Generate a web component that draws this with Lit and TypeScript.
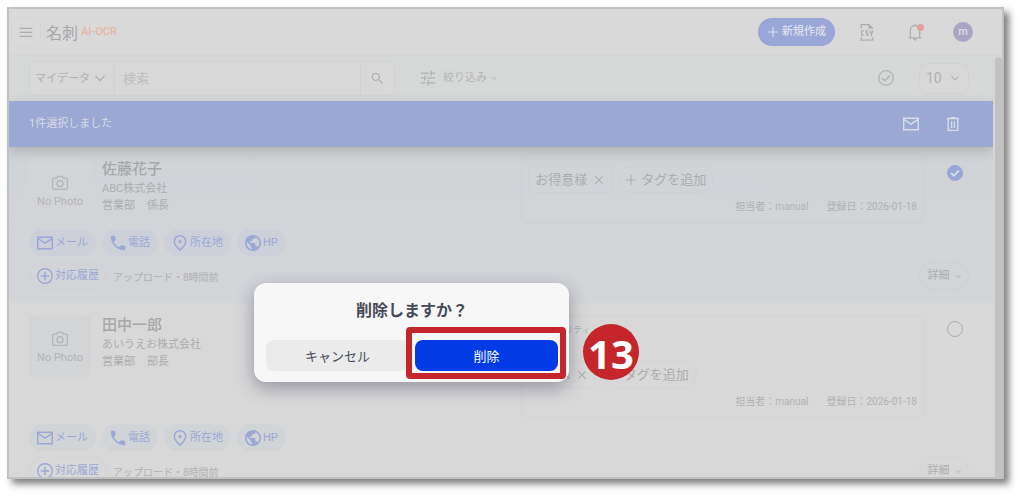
import { LitElement, html, css, svg, nothing } from "lit";
import { customElement, property } from "lit/decorators.js";

const icons = {
  menu: svg`<path d="M4 7.500h16M4 12.500h16M4 17.500h16" fill="none" stroke="currentColor" stroke-width="1.400"/>`,
  plus: svg`<path d="M12 2v20M2 12h20" fill="none" stroke="currentColor" stroke-width="2.2"/>`,
  close: svg`<path d="M3 3l18 18M21 3L3 21" fill="none" stroke="currentColor" stroke-width="2.6"/>`,
  chevron: svg`<path d="M3 8l9 9 9-9" fill="none" stroke="currentColor" stroke-width="3"/>`,
  search: svg`<path fill="currentColor" d="M15.5 14h-.79l-.28-.27A6.47 6.47 0 0 0 16 9.5 6.5 6.5 0 1 0 9.5 16c1.61 0 3.09-.59 4.23-1.57l.27.28v.79l5 4.99L20.49 19l-4.99-5zm-6 0C7.01 14 5 11.99 5 9.5S7.01 5 9.5 5 14 7.01 14 9.5 11.99 14 9.5 14z"/>`,
  tune: svg`<path fill="currentColor" d="M3 17v2h6v-2H3zM3 5v2h10V5H3zm10 16v-2h8v-2h-8v-2h-2v6h2zM7 9v2H3v2h4v2h2V9H7zm14 4v-2H11v2h10zm-6-4h2V7h4V5h-4V3h-2v6z"/>`,
  checkCircle: svg`<circle cx="12" cy="12" r="9.1" fill="none" stroke="currentColor" stroke-width="1.6"/><path d="M7.2 12.2l3.3 3.3 6.4-6.4" fill="none" stroke="currentColor" stroke-width="1.8"/>`,
  check: svg`<path d="M7.2 12.2l3.3 3.3 6.4-6.6" fill="none" stroke="currentColor" stroke-width="2.2"/>`,
  mail: svg`<path fill="currentColor" d="M22 4H2v16h20V4zm-1.8 14.2H3.8V8l8.2 5.2L20.200 8v10.200zM12 11.200L3.800 5.800h16.400L12 11.200z"/>`,
  trash: svg`<path fill="none" stroke="currentColor" stroke-width="1.800" d="M4.500 5.200h15M9 4h6M6 5.500v14.500h12V5.500M10.200 8.500v8.500M13.800 8.500v8.500"/>`,
  phone: svg`<path fill="currentColor" d="M6.620 10.790c1.440 2.830 3.760 5.140 6.590 6.590l2.200-2.200c.27-.27.67-.36 1.020-.24 1.120.37 2.330.57 3.570.57.550 0 1 .45 1 1V20c0 .550-.450 1-1 1-9.390 0-17-7.610-17-17 0-.550.450-1 1-1h3.500c.550 0 1 .450 1 1 0 1.250.200 2.450.570 3.570.110.350.030.740-.250 1.020l-2.200 2.200z"/>`,
  pin: svg`<path fill="none" stroke="currentColor" stroke-width="1.800" d="M12 2.900c3.900 0 7.100 3 7.100 7.300 0 3-2.300 6.500-7.100 10.700-4.800-4.200-7.100-7.700-7.100-10.700 0-4.300 3.200-7.300 7.100-7.300z"/><circle cx="12" cy="10" r="1.900" fill="currentColor"/>`,
  globe: svg`<path fill="currentColor" d="M12 2C6.480 2 2 6.480 2 12s4.480 10 10 10 10-4.480 10-10S17.520 2 12 2zm-1 17.930c-3.950-.490-7-3.850-7-7.930 0-.620.080-1.210.210-1.790L9 15v1c0 1.100.900 2 2 2v1.930zm6.900-2.540c-.260-.810-1-1.390-1.900-1.390h-1v-3c0-.550-.450-1-1-1H8v-2h2c.550 0 1-.450 1-1V7h2c1.100 0 2-.900 2-2v-.410c2.930 1.190 5 4.060 5 7.410 0 2.080-.800 3.970-2.100 5.390z"/>`,
  plusCircle: svg`<circle cx="12" cy="12" r="9.100" fill="none" stroke="currentColor" stroke-width="1.700"/><path d="M12 6.800v10.400M6.800 12h10.400" fill="none" stroke="currentColor" stroke-width="1.800"/>`,
  camera: svg`<path fill="none" stroke="currentColor" stroke-width="1.600" stroke-linejoin="round" d="M9.400 3.800h5.200l1.700 2h3.100q1.800 0 1.800 1.800v10.600q0 1.800-1.800 1.800H4.600q-1.800 0-1.800-1.800V7.600q0-1.800 1.800-1.800h3.100z"/><circle cx="12" cy="12.800" r="3.700" fill="none" stroke="currentColor" stroke-width="1.600"/>`,
  bell: svg`<path fill="none" stroke="currentColor" stroke-width="1.400" d="M5 18.500h14M6.800 18.500V10.500c0-3.200 2.100-5.500 5.200-5.500s5.200 2.300 5.200 5.500v8M12 5V3.400"/><path fill="currentColor" d="M10 19.400h4c0 1.100-.9 2-2 2s-2-.9-2-2z"/>`,
  csv: svg`<path fill="none" stroke="currentColor" stroke-width="1.400" d="M5.500 8.500V3.800h8.500l4.500 4.400M5.500 17.500v3.500h13v-3.500"/><path fill="currentColor" d="M13.600 3.200v5.300h5.500z"/><path fill="none" stroke="currentColor" stroke-width="1.300" d="M8.600 10.800H6v4.700h2.600M13.600 10.800h-2.800v2.300h2.500v2.400h-2.800M15.500 10.300l1.500 5 1.500-5"/>`,
};
type IconName = keyof typeof icons;

const icon = (name: IconName, size = "m") =>
  html`<svg class="icon ${size}" viewBox="2 2 20 20" aria-hidden="true">${icons[name]}</svg>`;

interface Contact {
  id: string;
  name: string;
  company: string;
  dept: string;
  title: string;
  tag: string;
  priority?: string;
  selected: boolean;
}

const contacts: Contact[] = [
  { id: "c1", name: "佐藤花子", company: "ABC株式会社", dept: "営業部", title: "係長", tag: "お得意様", selected: true },
  { id: "c2", name: "田中一郎", company: "あいうえお株式会社", dept: "営業部", title: "部長", tag: "見込A", priority: "プライオリティ", selected: false },
];

const links: { icon: IconName; label: string }[] = [
  { icon: "mail", label: "メール" },
  { icon: "phone", label: "電話" },
  { icon: "pin", label: "所在地" },
  { icon: "globe", label: "HP" },
];

const base = css`
  * { box-sizing: border-box; }
  button, input, select { font: inherit; color: inherit; margin: 0; padding: 0; border: 0; background: none; }
  a { color: inherit; text-decoration: none; }
  h1, h2, p { margin: 0; }
  .icon { display: block; flex: none; width: 16px; height: 16px; }
  .icon.xs { width: 6px; height: 6px; }
  .icon.s { width: 10px; height: 10px; }
  .icon.l { width: 18px; height: 18px; }
`;

@customElement("contact-card")
class ContactCard extends LitElement {
  @property({ attribute: false }) contact!: Contact;

  static styles = [base, css`
    :host { display: block; }
    .card { padding: 12px 24px 13px 20px; background: #d8d8d8; --photo: #d2d4d5; --chip: #d0d4d6; --line: #d3d3d3; }
    .card.selected {
      background: linear-gradient(#cfd3d6, #d2d4d8 80px);
      --photo: #d3d4d6; --chip: #cdd0d9; --line: #cdcfd2;
    }
    .top { display: grid; grid-template-columns: minmax(0, 55fr) minmax(0, 45fr) 45px; }
    .who { display: flex; gap: 11px; }
    .photo {
      width: 62px; height: 62px; border-radius: 6px; background: var(--photo); color: #b4b5b7;
      display: flex; flex-direction: column; align-items: center; justify-content: center; gap: 3px;
      padding-top: 4px; line-height: 15px;
    }
    .name { font-size: 15px; line-height: 20px; margin-bottom: 1px; font-weight: 500; color: #a6a7aa; }
    .line { display: flex; gap: 12px; line-height: 17px; color: #acaeb0; }
    .memo {
      padding: 6px; border: 1px solid var(--line); border-radius: 6px;
      display: flex; flex-direction: column; color: #b0b2b4;
    }
    .priority { font-size: 9px; line-height: 16px; padding-bottom: 23px; }
    .tags { display: flex; gap: 6px; font-size: 13px; color: #abadaf; }
    .tag, .add { height: 27px; display: flex; align-items: center; border: 1px solid var(--line); line-height: 18px; }
    .tag { gap: 8px; padding: 0 8px 0 6px; border-radius: 5px; }
    .tag .icon { width: 8px; height: 8px; }
    .add { gap: 5px; padding: 0 7px; border-radius: 14px; }
    .meta { display: flex; justify-content: flex-end; gap: 18px; font-size: 10px; line-height: 15px; padding: 6px 0 2px; }
    .pick { display: flex; justify-content: flex-end; align-items: flex-start; padding: 6px 6px 0 0; }
    .tick { position: relative; display: block; width: 16px; height: 16px; color: #dfe1e6; }
    .tick input { appearance: none; display: block; width: 16px; height: 16px; border: 1px solid #abacae; border-radius: 50%; }
    .tick input:checked { background: #98a7d8; border-color: #98a7d8; }
    .tick .icon { position: absolute; inset: 0; pointer-events: none; }
    .row { display: flex; align-items: center; gap: 6px; margin-top: 6px; }
    .chip { height: 27px; display: flex; align-items: center; gap: 2px; padding: 0 8px; border-radius: 14px; background: var(--chip); color: #9ba8d6; line-height: 16px; }
    .pill { height: 28px; display: flex; align-items: center; gap: 2px; padding: 0 7px; border: 1px solid var(--line); border-radius: 14px; line-height: 16px; }
    .history { color: #9ba8d6; }
    .stamp { flex: 1; font-size: 10px; color: #b0b2b4; }
    .details { width: 50px; justify-content: center; gap: 5px; color: #adafb1; }
  `];

  render() {
    const c = this.contact;
    return html`
      <article class="card ${c.selected ? "selected" : ""}">
        <div class="top">
          <div class="who">
            <div class="photo">${icon("camera")}<span>No Photo</span></div>
            <div>
              <h2 class="name">${c.name}</h2>
              <p class="line">${c.company}</p>
              <p class="line"><span>${c.dept}</span><span>${c.title}</span></p>
            </div>
          </div>
          <div class="memo">
            ${c.priority ? html`<p class="priority">${c.priority}</p>` : nothing}
            <div class="tags">
              <span class="tag">${c.tag}<button aria-label="タグを削除">${icon("close")}</button></span>
              <button class="add">${icon("plus", "s")}タグを追加</button>
            </div>
            <div class="meta"><span>担当者：manual</span><span>登録日：2026-01-18</span></div>
          </div>
          <div class="pick">
            <label class="tick" for=${c.id}>
              <input id=${c.id} type="checkbox" aria-label=${c.name} .checked=${c.selected} />
              ${c.selected ? icon("check") : nothing}
            </label>
          </div>
        </div>
        <nav class="row">
          ${links.map((l) => html`<a class="chip" href="#">${icon(l.icon)}${l.label}</a>`)}
        </nav>
        <div class="row">
          <button class="pill history">${icon("plusCircle")}対応履歴</button>
          <span class="stamp">アップロード・8時間前</span>
          <button class="pill details">詳細${icon("chevron", "xs")}</button>
        </div>
      </article>
    `;
  }
}

@customElement("app-root")
class AppRoot extends LitElement {
  static styles = [base, css`
    :host {
      display: block; height: 100vh; box-sizing: border-box; padding: 7px 20px 18px 7px; overflow: hidden;
      background: #fff; font: 11px Roboto, "Noto Sans CJK JP", sans-serif;
    }
    .shell { position: relative; height: 100%; border: 2px solid #c1c1c1; box-shadow: 5px 5px 7px rgba(0, 0, 0, 0.5); }
    .screen { height: 100%; overflow: hidden; display: flex; flex-direction: column; background: #d8d8d8; }
    header {
      flex: none; height: 46px; display: flex; align-items: center; padding: 0 29px 0 2px;
      border-bottom: 1px solid #d2d4d4; background: #d9d9d9; color: #adaeb0;
    }
    .menu { width: 30px; height: 30px; display: grid; place-items: center; border: 1px solid #d5d5d5; border-radius: 6px; }
    .brand { flex: 1; display: flex; align-items: center; gap: 3px; margin-left: 5px; font-size: 16px; font-weight: 400; color: #a6a7a9; }
    .brand small { font-size: 11px; font-weight: 500; color: #e2b8a6; }
    .new {
      height: 28px; display: flex; align-items: center; gap: 4px; padding: 0 9px 0 10px; border-radius: 14px;
      background: #98a7d8; color: #dcdfe8; font-weight: 500; line-height: 16px;
    }
    .tools { display: flex; align-items: center; gap: 28px; margin-left: 22px; }
    .tool { position: relative; width: 20px; height: 20px; display: grid; place-items: center; line-height: 16px; }
    .dot { position: absolute; top: 2px; right: 1px; width: 7px; height: 7px; border-radius: 50%; background: #dfa29e; }
    .avatar { border-radius: 50%; background: #aaa5c5; color: #e0dfe6; font-weight: 500; }
    .body { flex: 1; min-height: 0; display: flex; background: #d6d6d6; }
    .main { flex: 1; min-width: 0; overflow: hidden; }
    .track { flex: none; width: 9px; padding: 2px 0 0 2px; }
    .thumb { height: 100%; background: #c2c2c2; border-radius: 4px 4px 0 0; }
    .toolbar { height: 46px; display: flex; align-items: center; padding: 0 24px 0 20px; background: #d6d8d7; color: #b0b1b1; }
    .search { flex: 0 1 366px; height: 35px; display: flex; border: 1px solid #d1d2d2; border-radius: 6px; background: #d8d8d8; }
    .drop { position: relative; display: flex; }
    .drop select { appearance: none; width: 100%; outline: none; }
    .drop .icon { position: absolute; right: 9px; top: 50%; margin-top: -5px; pointer-events: none; }
    .scope { width: 85px; border-right: 1px solid #d1d2d2; }
    .scope select { padding-left: 5px; }
    .query { flex: 1; min-width: 0; font-size: 13px; }
    .query input { width: 100%; height: 100%; padding: 0 8px; outline: none; }
    .query input::placeholder { color: #bcbdbd; opacity: 1; }
    .go { width: 34px; display: grid; place-items: center; border-left: 1px solid #d1d2d2; }
    .go .icon { width: 13px; height: 13px; }
    .filter { display: flex; align-items: center; gap: 7px; margin-left: 25px; color: #b4b6b6; line-height: 16px; }
    .filter .xs { margin-left: -3px; }
    .all { margin-left: auto; }
    .count { width: 50px; height: 31px; margin-left: 25px; border: 1px solid #d1d2d2; border-radius: 8px; font-size: 14px; background: #d8d8d8; }
    .count select { padding-left: 6px; }
    .count .icon { width: 8px; height: 8px; margin-top: -4px; }
    .bar {
      position: relative; height: 46px; display: flex; align-items: center; gap: 26px; padding: 0 32px 0 20px;
      background: #9aa8d4; color: #d8dbe4; box-shadow: 0 4px 12px rgba(0, 0, 0, 0.16); line-height: 16px;
    }
    .bar p { flex: 1; }
    .dialog {
      position: absolute; left: 245px; top: 274px; width: 315px; padding: 16px 11px 11px 12px;
      border-radius: 12px; background: #f7f7f7; box-shadow: 0 6px 18px rgba(40, 42, 70, 0.38); color: #474c58;
    }
    .dialog h2 { font-size: 16px; line-height: 24px; font-weight: 700; text-align: center; }
    .actions { display: flex; gap: 6px; margin-top: 17px; font-size: 13px; }
    .actions button { flex: 1; height: 31px; border-radius: 8px; background: #ebebeb; }
    .actions .danger { position: relative; background: #003be6; color: #fff; }
    .mark { position: absolute; inset: -13px -8px -8px -9px; border: 6px solid #c4262b; border-radius: 4px; pointer-events: none; }
    .step {
      position: absolute; left: 574px; top: 315px; width: 56px; height: 56px; padding-top: 4px; border-radius: 50%;
      display: grid; place-items: center; background: #c4262b; color: #fff;
      font: 700 40px/40px "Noto Sans", sans-serif;
    }
  `];

  render() {
    return html`
      <div class="shell">
        <div class="screen">
          <header>
            <button class="menu" aria-label="メニュー">${icon("menu")}</button>
            <h1 class="brand">名刺<small>AI-OCR</small></h1>
            <button class="new">${icon("plus", "s")}新規作成</button>
            <div class="tools">
              <button class="tool" aria-label="CSV">${icon("csv", "l")}</button>
              <button class="tool" aria-label="通知">${icon("bell", "l")}<span class="dot"></span></button>
              <button class="tool avatar">m</button>
            </div>
          </header>
          <div class="body">
            <main class="main">
              <div class="toolbar">
                <div class="search">
                  <label class="drop scope"><select aria-label="検索範囲"><option>マイデータ</option></select>${icon("chevron", "s")}</label>
                  <label class="query"><input type="search" placeholder="検索" aria-label="検索" /></label>
                  <button class="go" aria-label="検索を実行">${icon("search")}</button>
                </div>
                <button class="filter">${icon("tune")}絞り込み${icon("chevron", "xs")}</button>
                <button class="all" aria-label="すべて選択">${icon("checkCircle")}</button>
                <label class="drop count"><select aria-label="表示件数"><option>10</option></select>${icon("chevron", "s")}</label>
              </div>
              <div class="bar">
                <p>1件選択しました</p>
                <button aria-label="メール送信">${icon("mail")}</button>
                <button aria-label="削除">${icon("trash")}</button>
              </div>
              ${contacts.map((c) => html`<contact-card .contact=${c}></contact-card>`)}
            </main>
            <div class="track"><div class="thumb"></div></div>
          </div>
        </div>
        <section class="dialog" role="dialog" aria-labelledby="ask">
          <h2 id="ask">削除しますか？</h2>
          <div class="actions">
            <button>キャンセル</button>
            <button class="danger">削除<span class="mark"></span></button>
          </div>
        </section>
        <div class="step">13</div>
      </div>
    `;
  }
}
